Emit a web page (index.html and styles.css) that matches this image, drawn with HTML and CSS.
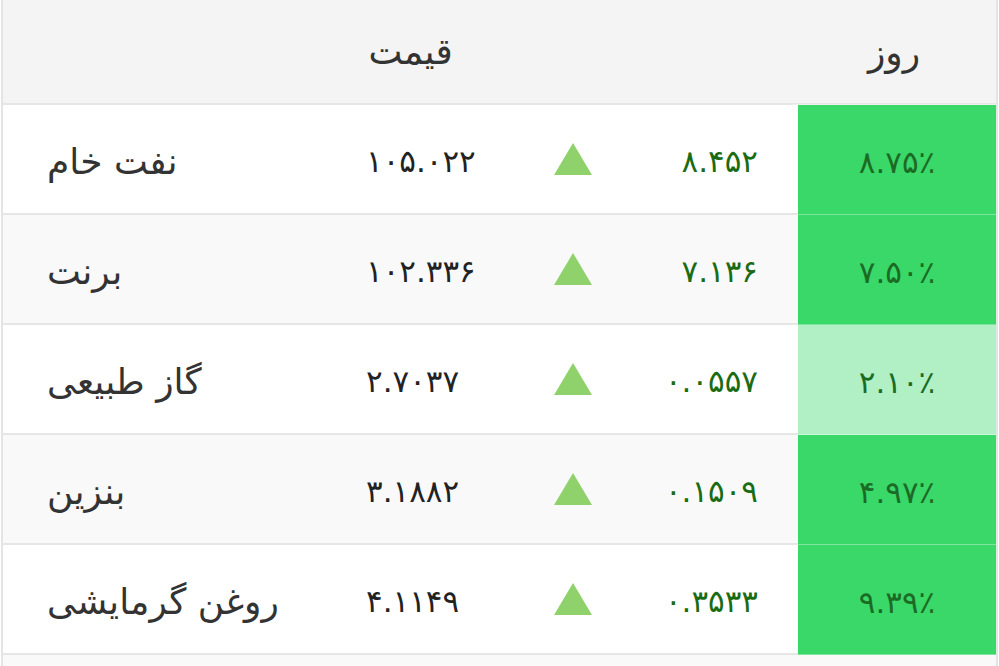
FILE: index.html
```html
<!DOCTYPE html>
<html lang="fa">
<head>
<meta charset="utf-8">
<link rel="stylesheet" href="styles.css">
</head>
<body>
<div class="table">
  <div class="row head">
    <div class="c name"></div>
    <div class="c price">قیمت</div>
    <div class="c arrow"></div>
    <div class="c chg"></div>
    <div class="c pct">روز</div>
  </div>
  <div class="row">
    <div class="c name">نفت خام</div>
    <div class="c price">۱۰۵.۰۲۲</div>
    <div class="c arrow"><span class="tri"></span></div>
    <div class="c chg">۸.۴۵۲</div>
    <div class="c pct up">۸.۷۵٪</div>
  </div>
  <div class="row alt">
    <div class="c name">برنت</div>
    <div class="c price">۱۰۲.۳۳۶</div>
    <div class="c arrow"><span class="tri"></span></div>
    <div class="c chg">۷.۱۳۶</div>
    <div class="c pct up">۷.۵۰٪</div>
  </div>
  <div class="row">
    <div class="c name">گاز طبیعی</div>
    <div class="c price">۲.۷۰۳۷</div>
    <div class="c arrow"><span class="tri"></span></div>
    <div class="c chg">۰.۰۵۵۷</div>
    <div class="c pct light">۲.۱۰٪</div>
  </div>
  <div class="row alt">
    <div class="c name">بنزین</div>
    <div class="c price">۳.۱۸۸۲</div>
    <div class="c arrow"><span class="tri"></span></div>
    <div class="c chg">۰.۱۵۰۹</div>
    <div class="c pct up">۴.۹۷٪</div>
  </div>
  <div class="row">
    <div class="c name">روغن گرمایشی</div>
    <div class="c price">۴.۱۱۴۹</div>
    <div class="c arrow"><span class="tri"></span></div>
    <div class="c chg">۰.۳۵۳۳</div>
    <div class="c pct up">۹.۳۹٪</div>
  </div>
  <div class="row alt last">
    <div class="c name"></div>
    <div class="c price"></div>
    <div class="c arrow"></div>
    <div class="c chg"></div>
    <div class="c pct"></div>
  </div>
</div>
</body>
</html>
```
FILE: styles.css
```css
html, body {
  margin: 0;
  padding: 0;
  background: #ffffff;
  overflow: hidden;
  height: 666px;
}
body {
  font-family: "DejaVu Sans", "Noto Sans", sans-serif;
  color: #2b2b2b;
}
.table {
  margin-left: 1px;
  width: 997px;
  border-left: 2px solid #e4e4e4;
  border-right: 2px solid #e4e4e4;
  box-sizing: border-box;
}
.row {
  display: grid;
  grid-template-columns: 340px 190px 90px 175px 1fr;
  height: 110px;
  border-bottom: 2px solid #e6e6e6;
  box-sizing: border-box;
  background: #ffffff;
}
.row.alt { background: #f9f9f9; }
.row.last { height: 20px; border-bottom: 0; }
.row.head {
  height: 105px;
  background: #f4f4f4;
}
.c {
  display: flex;
  align-items: center;
  font-size: 31px;
  line-height: 1;
  padding-top: 5px;
  box-sizing: border-box;
}
.name {
  padding-left: 44px;
  color: #333333;
  font-size: 36px;
}
.price {
  padding-left: 23px;
  color: #222222;
}
.head .c { padding-top: 0; }
.head .price {
  justify-content: center;
  padding-left: 0;
  margin-left: -55px;
  font-size: 36px;
  color: #333333;
}
.head .pct {
  justify-content: center;
  margin-left: -6px;
  color: #333333;
  font-size: 36px;
}
.arrow {
  padding-left: 21px;
}
.tri {
  width: 0;
  height: 0;
  border-left: 19px solid transparent;
  border-right: 19px solid transparent;
  border-bottom: 32px solid #8fd16a;
  margin-top: -6px;
}
.chg {
  justify-content: flex-end;
  color: #1a6b12;
  padding-right: 40px;
}
.pct {
  justify-content: center;
  color: #1c6b24;
  margin-bottom: -2px;
  box-shadow: inset 0 -1px 0 rgba(255,255,255,0.35);
}
.last .pct { margin-bottom: 0; }
.pct.up { background: #39d869; }
.pct.light { background: #b0f0c4; }
```
